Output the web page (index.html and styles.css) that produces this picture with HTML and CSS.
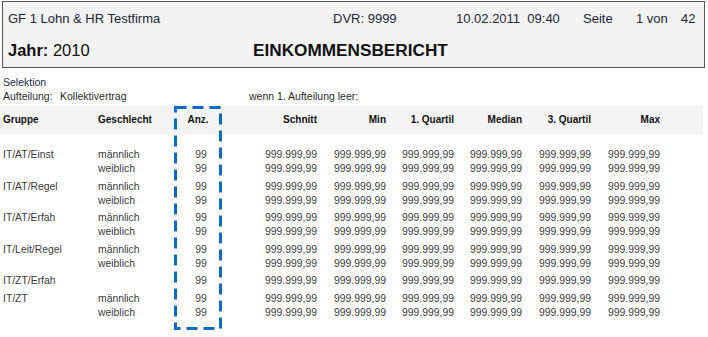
FILE: index.html
```html
<!DOCTYPE html>
<html lang="de">
<head>
<meta charset="utf-8">
<title>Einkommensbericht</title>
<link rel="stylesheet" href="styles.css">
</head>
<body>
<div class="page">
  <header class="head">
    <div class="head-line1">
      <span class="firm">GF 1 Lohn &amp; HR Testfirma</span>
      <span class="dvr">DVR: 9999</span>
      <span class="date">10.02.2011&nbsp; 09:40</span>
      <span class="seite">Seite</span>
      <span class="pg">1 von</span>
      <span class="total">42</span>
    </div>
    <div class="head-line2">
      <span class="jahr"><b>Jahr:</b> 2010</span>
      <span class="title">EINKOMMENSBERICHT</span>
    </div>
  </header>

  <div class="sel">
    <div class="sel-title">Selektion</div>
    <div class="sel-line">
      <span class="sel-lbl">Aufteilung:</span>
      <span class="sel-val">Kollektivertrag</span>
      <span class="sel-extra">wenn 1. Aufteilung leer:</span>
    </div>
  </div>

  <div class="tbl">
    <div class="thead row">
      <span>Gruppe</span><span>Geschlecht</span><span class="c">Anz.</span>
      <span class="r">Schnitt</span><span class="r">Min</span><span class="r">1. Quartil</span>
      <span class="r">Median</span><span class="r">3. Quartil</span><span class="r">Max</span>
    </div>

    <div class="tbody">
      <div class="grp">
        <div class="row"><span>IT/AT/Einst</span><span>männlich</span><span class="c n">99</span><span class="r">999.999,99</span><span class="r">999.999,99</span><span class="r">999.999,99</span><span class="r">999.999,99</span><span class="r">999.999,99</span><span class="r">999.999,99</span></div>
        <div class="row"><span></span><span>weiblich</span><span class="c n">99</span><span class="r">999.999,99</span><span class="r">999.999,99</span><span class="r">999.999,99</span><span class="r">999.999,99</span><span class="r">999.999,99</span><span class="r">999.999,99</span></div>
      </div>
      <div class="grp">
        <div class="row"><span>IT/AT/Regel</span><span>männlich</span><span class="c n">99</span><span class="r">999.999,99</span><span class="r">999.999,99</span><span class="r">999.999,99</span><span class="r">999.999,99</span><span class="r">999.999,99</span><span class="r">999.999,99</span></div>
        <div class="row"><span></span><span>weiblich</span><span class="c n">99</span><span class="r">999.999,99</span><span class="r">999.999,99</span><span class="r">999.999,99</span><span class="r">999.999,99</span><span class="r">999.999,99</span><span class="r">999.999,99</span></div>
      </div>
      <div class="grp">
        <div class="row"><span>IT/AT/Erfah</span><span>männlich</span><span class="c n">99</span><span class="r">999.999,99</span><span class="r">999.999,99</span><span class="r">999.999,99</span><span class="r">999.999,99</span><span class="r">999.999,99</span><span class="r">999.999,99</span></div>
        <div class="row"><span></span><span>weiblich</span><span class="c n">99</span><span class="r">999.999,99</span><span class="r">999.999,99</span><span class="r">999.999,99</span><span class="r">999.999,99</span><span class="r">999.999,99</span><span class="r">999.999,99</span></div>
      </div>
      <div class="grp">
        <div class="row"><span>IT/Leit/Regel</span><span>männlich</span><span class="c n">99</span><span class="r">999.999,99</span><span class="r">999.999,99</span><span class="r">999.999,99</span><span class="r">999.999,99</span><span class="r">999.999,99</span><span class="r">999.999,99</span></div>
        <div class="row"><span></span><span>weiblich</span><span class="c n">99</span><span class="r">999.999,99</span><span class="r">999.999,99</span><span class="r">999.999,99</span><span class="r">999.999,99</span><span class="r">999.999,99</span><span class="r">999.999,99</span></div>
      </div>
      <div class="grp">
        <div class="row"><span>IT/ZT/Erfah</span><span></span><span class="c n">99</span><span class="r">999.999,99</span><span class="r">999.999,99</span><span class="r">999.999,99</span><span class="r">999.999,99</span><span class="r">999.999,99</span><span class="r">999.999,99</span></div>
      </div>
      <div class="grp">
        <div class="row"><span>IT/ZT</span><span>männlich</span><span class="c n">99</span><span class="r">999.999,99</span><span class="r">999.999,99</span><span class="r">999.999,99</span><span class="r">999.999,99</span><span class="r">999.999,99</span><span class="r">999.999,99</span></div>
        <div class="row"><span></span><span>weiblich</span><span class="c n">99</span><span class="r">999.999,99</span><span class="r">999.999,99</span><span class="r">999.999,99</span><span class="r">999.999,99</span><span class="r">999.999,99</span><span class="r">999.999,99</span></div>
      </div>
    </div>
  </div>

  <svg class="highlight" width="48" height="224" viewBox="0 0 48 224" aria-hidden="true">
    <rect x="1.5" y="1.5" width="45" height="221" fill="none" stroke="#0b6bc6" stroke-width="3" stroke-dasharray="11 6"/>
  </svg>
</div>
</body>
</html>
```

FILE: styles.css
```css
* { box-sizing: border-box; }
html, body { margin: 0; padding: 0; background: #fff; }
body {
  font-family: "Liberation Sans", Arial, sans-serif;
  color: #222;
  width: 708px;
  height: 337px;
  overflow: hidden;
}
.page { position: relative; width: 708px; height: 337px; }

.head {
  margin: 1px 0 0 2px;
  width: 703px;
  height: 67px;
  background: #f3f3f3;
  border: 1px solid #555;
  padding: 0 0 0 5px;
  color: #1d2535;
}
.head-line1 {
  display: flex;
  font-size: 13px;
  line-height: 16px;
  padding-top: 9px;
  white-space: nowrap;
}
.firm { width: 325px; }
.dvr { width: 123px; }
.date { width: 127px; }
.seite { width: 53px; }
.pg { width: 45px; }
.head-line2 {
  display: flex;
  align-items: baseline;
  padding-top: 13px;
  white-space: nowrap;
  color: #111;
}
.jahr { width: 245px; font-size: 16.5px; }
.jahr b { font-weight: bold; }
.title { font-size: 17.2px; font-weight: bold; }

.sel {
  padding: 7px 0 0 3px;
  font-size: 10.5px;
  line-height: 14px;
  color: #2a2a2a;
}
.sel-title { color: #1d2a4a; }
.sel-line { display: flex; }
.sel-lbl { width: 57px; }
.sel-val { width: 189px; }

.tbl { margin-top: 2px; font-size: 10px; }
.row {
  display: grid;
  grid-template-columns: 95px 76px 48px 95px 69px 68px 68px 69px 69px;
  padding-left: 3px;
  line-height: 14px;
  white-space: nowrap;
}
.thead {
  height: 30px;
  line-height: 30px;
  width: 703px;
  background: #f4f4f4;
  font-weight: bold;
  color: #111;
}
.c { text-align: center; }
.r { text-align: right; }
.tbody { padding-top: 13px; color: #3a3a3a; font-size: 10.4px; }
.tbody .n { padding-left: 6px; }
.grp { padding-bottom: 3.5px; }

.highlight {
  position: absolute;
  left: 174px;
  top: 105px;
}
```
